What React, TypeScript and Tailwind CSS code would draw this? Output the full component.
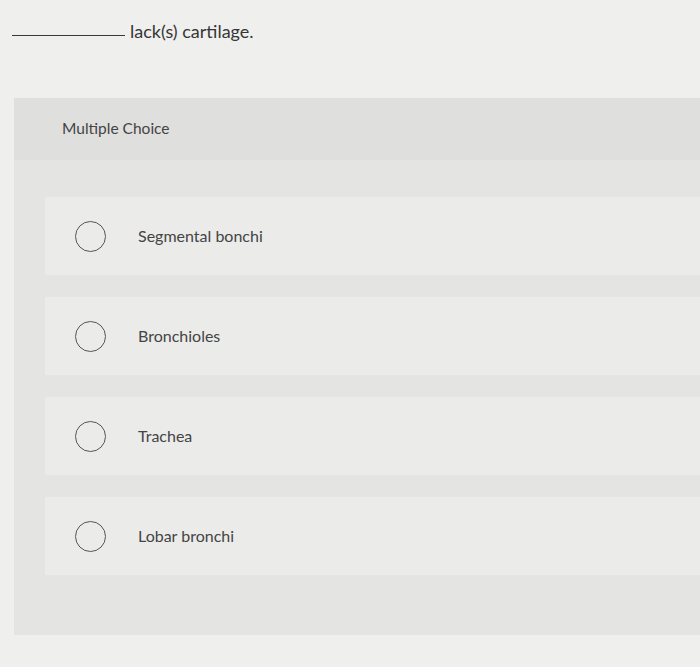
const choices = ['Segmental bonchi', 'Bronchioles', 'Trachea', 'Lobar bronchi'];

function Choice({ label }: { label: string }) {
  return (
    <div className="h-[78px] bg-[#ebebea] flex items-center">
      <span className="ml-[30px] w-[31px] h-[31px] rounded-full border-[1.5px] border-[#555] shrink-0" />
      <span className="ml-[32px] text-[16px] text-[#444]">{label}</span>
    </div>
  );
}

export default function App() {
  return (
    <div
      className="w-[700px] h-[667px] bg-[#efefed] overflow-hidden"
      style={{ fontFamily: 'Lato, "Open Sans", sans-serif' }}
    >
      {/* Question stem */}
      <div className="pt-[18px] pl-3 flex items-end">
        <span className="w-[113px] border-b border-[#3a3a3a] mb-[8px]" />
        <span className="ml-[5px] text-[18px] text-[#363636] leading-[26px]">lack(s) cartilage.</span>
      </div>

      {/* Answer panel */}
      <div className="mt-[54px] ml-[14px] h-[537px] bg-[#e4e4e3]">
        <div className="h-[62px] bg-[#dfdfde] flex items-center pl-12">
          <span className="text-[15.5px] text-[#444]">Multiple Choice</span>
        </div>
        <div className="mt-[37px] ml-[31px] flex flex-col gap-[22px]">
          {choices.map((c) => (
            <Choice key={c} label={c} />
          ))}
        </div>
      </div>
    </div>
  );
}
